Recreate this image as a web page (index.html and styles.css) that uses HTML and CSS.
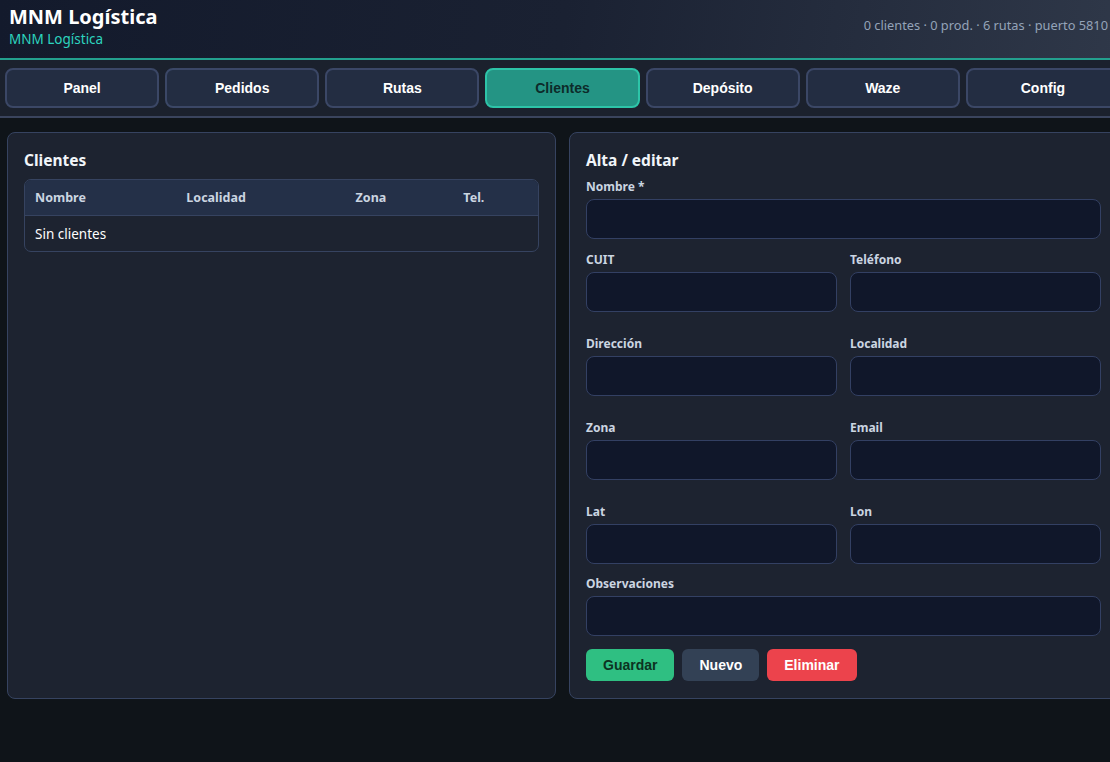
FILE: index.html
```html
<!DOCTYPE html>
<html lang="es">
<head>
    <meta charset="UTF-8">
    <meta name="viewport" content="width=device-width, initial-scale=1.0">
    <title>MNM Logística</title>
    <link rel="stylesheet" href="styles.css">
</head>
<body>
<div class="app">
    <header class="topbar">
        <div class="brand">
            <h1>MNM Logística</h1>
            <div class="sub">MNM Logística</div>
        </div>
        <div class="stats">0 clientes · 0 prod. · 6 rutas · puerto 5810</div>
    </header>

    <nav class="tabs">
        <button class="tab">Panel</button>
        <button class="tab">Pedidos</button>
        <button class="tab">Rutas</button>
        <button class="tab active">Clientes</button>
        <button class="tab">Depósito</button>
        <button class="tab">Waze</button>
        <button class="tab">Config</button>
    </nav>

    <main class="content">
        <section class="card">
            <h2>Clientes</h2>
            <div class="table-wrap">
                <table>
                    <thead>
                        <tr>
                            <th class="c-nombre">Nombre</th>
                            <th class="c-loc">Localidad</th>
                            <th class="c-zona">Zona</th>
                            <th>Tel.</th>
                        </tr>
                    </thead>
                    <tbody>
                        <tr><td colspan="4">Sin clientes</td></tr>
                    </tbody>
                </table>
            </div>
        </section>

        <section class="card">
            <h2>Alta / editar</h2>
            <form class="form">
                <div class="field">
                    <label for="nombre">Nombre *</label>
                    <input id="nombre" type="text">
                </div>

                <div class="grid2">
                    <div class="field">
                        <label for="cuit">CUIT</label>
                        <input id="cuit" type="text">
                    </div>
                    <div class="field">
                        <label for="tel">Teléfono</label>
                        <input id="tel" type="text">
                    </div>
                    <div class="field">
                        <label for="dir">Dirección</label>
                        <input id="dir" type="text">
                    </div>
                    <div class="field">
                        <label for="loc">Localidad</label>
                        <input id="loc" type="text">
                    </div>
                    <div class="field">
                        <label for="zona">Zona</label>
                        <input id="zona" type="text">
                    </div>
                    <div class="field">
                        <label for="email">Email</label>
                        <input id="email" type="text">
                    </div>
                    <div class="field">
                        <label for="lat">Lat</label>
                        <input id="lat" type="text">
                    </div>
                    <div class="field">
                        <label for="lon">Lon</label>
                        <input id="lon" type="text">
                    </div>
                </div>

                <div class="field">
                    <label for="obs">Observaciones</label>
                    <input id="obs" type="text">
                </div>

                <div class="actions">
                    <button type="button" class="btn btn-ok">Guardar</button>
                    <button type="button" class="btn btn-new">Nuevo</button>
                    <button type="button" class="btn btn-del">Eliminar</button>
                </div>
            </form>
        </section>
    </main>
</div>
</body>
</html>
```

FILE: styles.css
```css
html, body {
    margin: 0;
    padding: 0;
    overflow: hidden;
}

body {
    background-color: #0f1419;
    color: #e5e7eb;
    font-family: "Noto Sans", "Open Sans", sans-serif;
    font-size: 14px;
}

.app {
    width: 1125px;
}

/* header */
.topbar {
    display: flex;
    justify-content: space-between;
    align-items: center;
    height: 60px;
    padding: 0 17px 6px 9px;
    box-sizing: border-box;
    background: linear-gradient(100deg, #131a2c 0%, #1a2132 50%, #2f3849 100%);
    border-bottom: 2px solid #23a08e;
}

.brand h1 {
    margin: 0;
    font-size: 20px;
    line-height: 25px;
    font-weight: 700;
    color: #ffffff;
}

.brand .sub {
    color: #2dd4bf;
    font-size: 13.5px;
    line-height: 20px;
}

.stats {
    color: #94a3b8;
    font-size: 12.8px;
    margin-bottom: 2px;
}

/* tabs */
.tabs {
    display: grid;
    grid-template-columns: repeat(7, 1fr);
    gap: 6px;
    padding: 8px 5px;
    background-color: #1b212d;
    border-bottom: 2px solid #3a445d;
}

.tab {
    height: 40px;
    background-color: #232d42;
    border: 2px solid #3b4766;
    border-radius: 8px;
    color: #ffffff;
    font-family: "Liberation Sans", Arial, sans-serif;
    font-size: 14px;
    font-weight: 700;
    cursor: pointer;
}

.tab.active {
    background-color: #249484;
    border-color: #2dc4a8;
    color: #0d2b2a;
}

/* content */
.content {
    display: grid;
    grid-template-columns: 1fr 1fr;
    gap: 13px;
    padding: 14px 7px;
}

.card {
    background-color: #1d2330;
    border: 1px solid #364360;
    border-radius: 8px;
    padding: 16px 16px 17px 16px;
}

.card h2 {
    margin: 0 0 8px 0;
    font-size: 15.5px;
    line-height: 22px;
    font-weight: 700;
    color: #f1f5f9;
}

.table-wrap {
    border: 1px solid #364360;
    border-radius: 7px;
    overflow: hidden;
}

table {
    width: 100%;
    border-collapse: collapse;
}

th, td {
    text-align: left;
    padding: 0 10px;
    height: 35px;
    font-size: 13.5px;
}

th {
    background-color: #243048;
    color: #cbd5e1;
    font-size: 12.5px;
    font-weight: 700;
    border-bottom: 1px solid #364360;
}

td {
    color: #ffffff;
}

.c-nombre { width: 29.5%; }
.c-loc { width: 33%; }
.c-zona { width: 21%; }

/* form */
.form {
    display: flex;
    flex-direction: column;
    gap: 12px;
    margin-top: 4px;
}

.grid2 {
    display: grid;
    grid-template-columns: 1fr 1fr;
    column-gap: 13px;
    row-gap: 24px;
    margin-top: 1px;
}

.field label {
    display: block;
    font-size: 12px;
    line-height: 16px;
    font-weight: 700;
    color: #cbd5e1;
    margin-bottom: 4px;
}

.field input {
    display: block;
    width: 100%;
    height: 40px;
    box-sizing: border-box;
    background-color: #10172a;
    border: 1px solid #334063;
    border-radius: 8px;
    color: #e5e7eb;
    padding: 0 10px;
}

.actions {
    display: flex;
    gap: 8px;
    margin-top: 1px;
}

.btn {
    height: 32px;
    padding: 0 17px;
    border: none;
    border-radius: 6px;
    font-family: "Liberation Sans", Arial, sans-serif;
    font-size: 14px;
    font-weight: 700;
    cursor: pointer;
}

.btn-ok {
    background-color: #2fbf82;
    color: #0c3321;
}

.btn-new {
    background-color: #334155;
    color: #ffffff;
}

.btn-del {
    background-color: #ec434c;
    color: #ffffff;
}
```
